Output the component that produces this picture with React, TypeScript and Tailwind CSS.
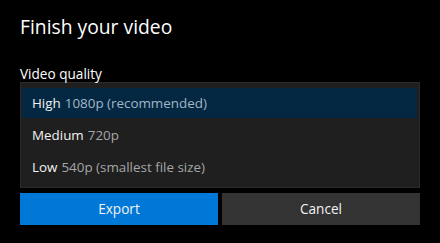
import { useState } from 'react';

const options = [
  { name: 'High', detail: '1080p (recommended)' },
  { name: 'Medium', detail: '720p' },
  { name: 'Low', detail: '540p (smallest file size)' },
];

export default function App() {
  const [selected, setSelected] = useState(0);

  return (
    <div className="w-[440px] h-[243px] bg-black text-white font-['Open_Sans',sans-serif] px-5 overflow-hidden">
      {/* Title */}
      <h1 className="pt-[13px] text-[19.3px] leading-[28px] font-normal">Finish your video</h1>

      {/* Quality list */}
      <div className="mt-[25px] text-[13.6px] leading-[16px]">Video quality</div>
      <div className="h-[106px] border border-[#2b2b2b] bg-[#1f1f1f] pt-[5px] pl-px pr-[2px]">
        {options.map((opt, i) => (
          <button
            key={opt.name}
            onClick={() => setSelected(i)}
            className={`flex items-center w-full h-[30px] mb-[2px] pl-[10px] text-[13.4px] text-left ${
              selected === i ? 'bg-[#042842]' : ''
            }`}
          >
            <span className="text-[#f2f2f2]">{opt.name}</span>
            <span className={`ml-1 ${selected === i ? 'text-[#a3b6c8]' : 'text-[#a6a6a6]'}`}>{opt.detail}</span>
          </button>
        ))}
      </div>

      {/* Actions */}
      <div className="mt-[5px] flex gap-1">
        <button className="flex-1 h-8 bg-[#0078d7] text-[13.6px] text-[#f2f2f2]">Export</button>
        <button className="flex-1 h-8 bg-[#333333] text-[13.6px] text-[#f2f2f2]">Cancel</button>
      </div>
    </div>
  );
}
